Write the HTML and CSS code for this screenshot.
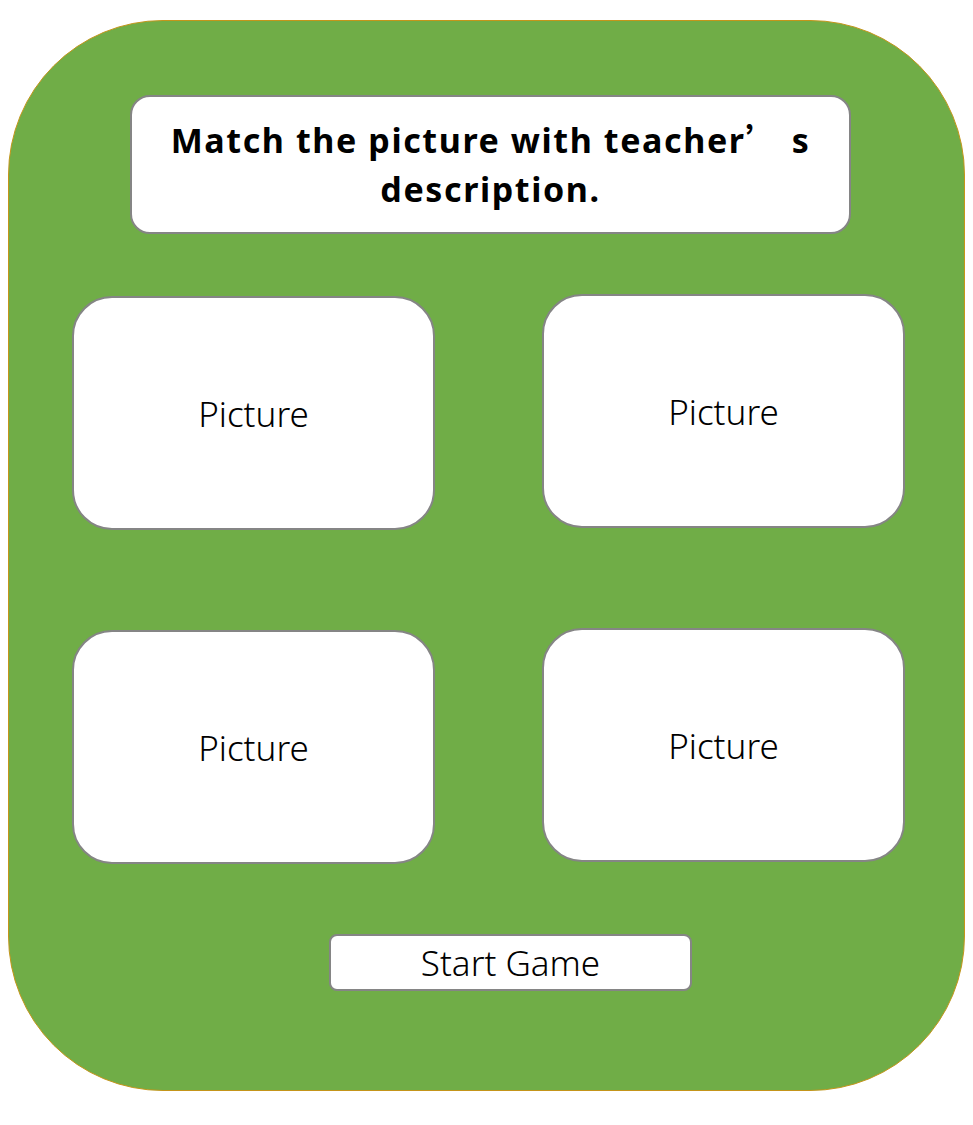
FILE: index.html
```html
<!DOCTYPE html>
<html lang="en">
<head>
<meta charset="utf-8">
<title>Match the picture</title>
<link rel="stylesheet" href="styles.css">
</head>
<body>
<div class="panel">
  <div class="title">Match the picture with teacher<span class="fw">’</span> s<br>description.</div>
  <div class="grid">
    <div class="card">Picture</div>
    <div class="card card--up">Picture</div>
    <div class="card">Picture</div>
    <div class="card card--up">Picture</div>
  </div>
  <div class="start">Start Game</div>
</div>
</body>
</html>
```
FILE: styles.css
```css
* { box-sizing: border-box; }
html, body { margin: 0; padding: 0; background: #ffffff; }
body {
  font-family: "Noto Sans", "Noto Sans CJK SC", sans-serif;
  color: #000;
}
.panel {
  margin: 20px 0 0 8px;
  width: 957px;
  height: 1071px;
  background: #70ad47;
  border: 1.5px solid #c4951a;
  border-radius: 155px;
  display: flex;
  flex-direction: column;
  align-items: flex-start;
  padding-top: 74px;
}
.title {
  margin-left: 121px;
  width: 721px;
  height: 139px;
  background: #fff;
  border: 2px solid #858585;
  border-radius: 20px;
  font-weight: 700;
  font-size: 34px;
  line-height: 49px;
  letter-spacing: 1.6px;
  text-align: center;
  padding-top: 17px;
}
.fw { font-family: "Noto Sans CJK SC", sans-serif; }
.grid {
  margin-top: 62px;
  margin-left: 63px;
  display: grid;
  grid-template-columns: 363px 363px;
  column-gap: 107px;
  row-gap: 100px;
}
.card {
  height: 234px;
  background: #fff;
  border: 2px solid #858585;
  border-radius: 40px;
  display: flex;
  align-items: center;
  justify-content: center;
  font-size: 35px;
  font-weight: 300;
}
.card--up { margin-top: -2px; }
.start {
  margin-top: 70px;
  margin-left: 320px;
  width: 363px;
  height: 57px;
  background: #fff;
  border: 2px solid #858585;
  border-radius: 8px;
  display: flex;
  align-items: center;
  justify-content: center;
  font-size: 35px;
  font-weight: 300;
}
```
